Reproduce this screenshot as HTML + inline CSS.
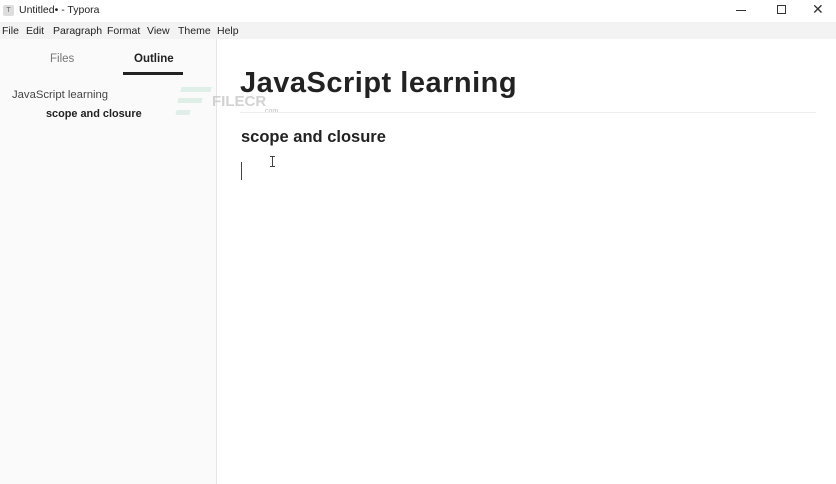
<!DOCTYPE html>
<html><head><meta charset="utf-8"><style>
*{margin:0;padding:0;box-sizing:border-box}
body{width:836px;height:484px;overflow:hidden;background:#fff;font-family:"Liberation Sans","DejaVu Sans",sans-serif;position:relative;color:#222}
.abs{position:absolute;white-space:nowrap}
#title{top:0;left:0;width:836px;height:22px;background:#fff}
#menu{top:22px;left:0;width:836px;height:17px;background:#f3f3f3;font-size:10.5px;color:#222}
#side{top:39px;left:0;width:217px;height:445px;background:#fafafa;border-right:1px solid #e6e6e6}
</style></head><body>
<div id="title" class="abs">
 <div class="abs" style="left:3px;top:5px;width:11px;height:11px;background:#ddd;border-radius:2px;font-size:7px;text-align:center;line-height:11px;color:#666">T</div>
 <div class="abs" style="left:19px;top:4px;font-size:10.5px;color:#222">Untitled• - Typora</div>
 <div class="abs" style="left:736px;top:10px;width:10px;height:1px;background:#333"></div>
 <div class="abs" style="left:777px;top:5px;width:9px;height:9px;border:1px solid #333"></div>
 <div class="abs" style="left:812px;top:1px;font-size:14px;color:#333">✕</div>
</div>
<div id="menu" class="abs">
 <span class="abs" style="left:2px;top:3px">File</span>
 <span class="abs" style="left:26px;top:3px">Edit</span>
 <span class="abs" style="left:53px;top:3px">Paragraph</span>
 <span class="abs" style="left:107px;top:3px">Format</span>
 <span class="abs" style="left:147px;top:3px">View</span>
 <span class="abs" style="left:178px;top:3px">Theme</span>
 <span class="abs" style="left:217px;top:3px">Help</span>
</div>
<div id="side" class="abs">
 <div class="abs" style="left:50px;top:14px;font-size:11.5px;color:#777">Files</div>
 <div class="abs" style="left:134px;top:14px;font-size:11.5px;font-weight:bold;color:#222">Outline</div>
 <div class="abs" style="left:123px;top:33px;width:60px;height:3px;background:#222"></div>
 <div class="abs" style="left:12px;top:50px;font-size:11.3px;color:#444">JavaScript learning</div>
 <div class="abs" style="left:46px;top:69px;font-size:10.9px;font-weight:bold;color:#222">scope and closure</div>
</div>
<div class="abs" style="left:181px;top:87px;width:30px;height:5px;background:#dfeee7;transform:skewX(-15deg)"></div>
<div class="abs" style="left:178px;top:98px;width:24px;height:5px;background:#dfeee7;transform:skewX(-15deg)"></div>
<div class="abs" style="left:176px;top:110px;width:14px;height:5px;background:#dfeee7;transform:skewX(-15deg)"></div>
<div class="abs" style="left:212px;top:93px;font-size:15px;font-weight:bold;color:#c8c8c8;opacity:.8">FILECR</div>
<div class="abs" style="left:263px;top:108px;font-size:7px;color:#bbb">.com</div>
<div class="abs" style="left:240px;top:67px;font-size:29px;letter-spacing:0.5px;font-weight:bold;color:#222">JavaScript learning</div>
<div class="abs" style="left:240px;top:112px;width:576px;height:1px;background:#eee"></div>
<div class="abs" style="left:241px;top:128px;font-size:16.5px;font-weight:bold;color:#222">scope and closure</div>
<div class="abs" style="left:241px;top:162px;width:1px;height:18px;background:#444"></div>
<div class="abs" style="left:272px;top:156px;width:1px;height:10px;background:#444"></div>
<div class="abs" style="left:270px;top:156px;width:5px;height:1px;background:#444"></div>
<div class="abs" style="left:270px;top:166px;width:5px;height:1px;background:#444"></div>
</body></html>
